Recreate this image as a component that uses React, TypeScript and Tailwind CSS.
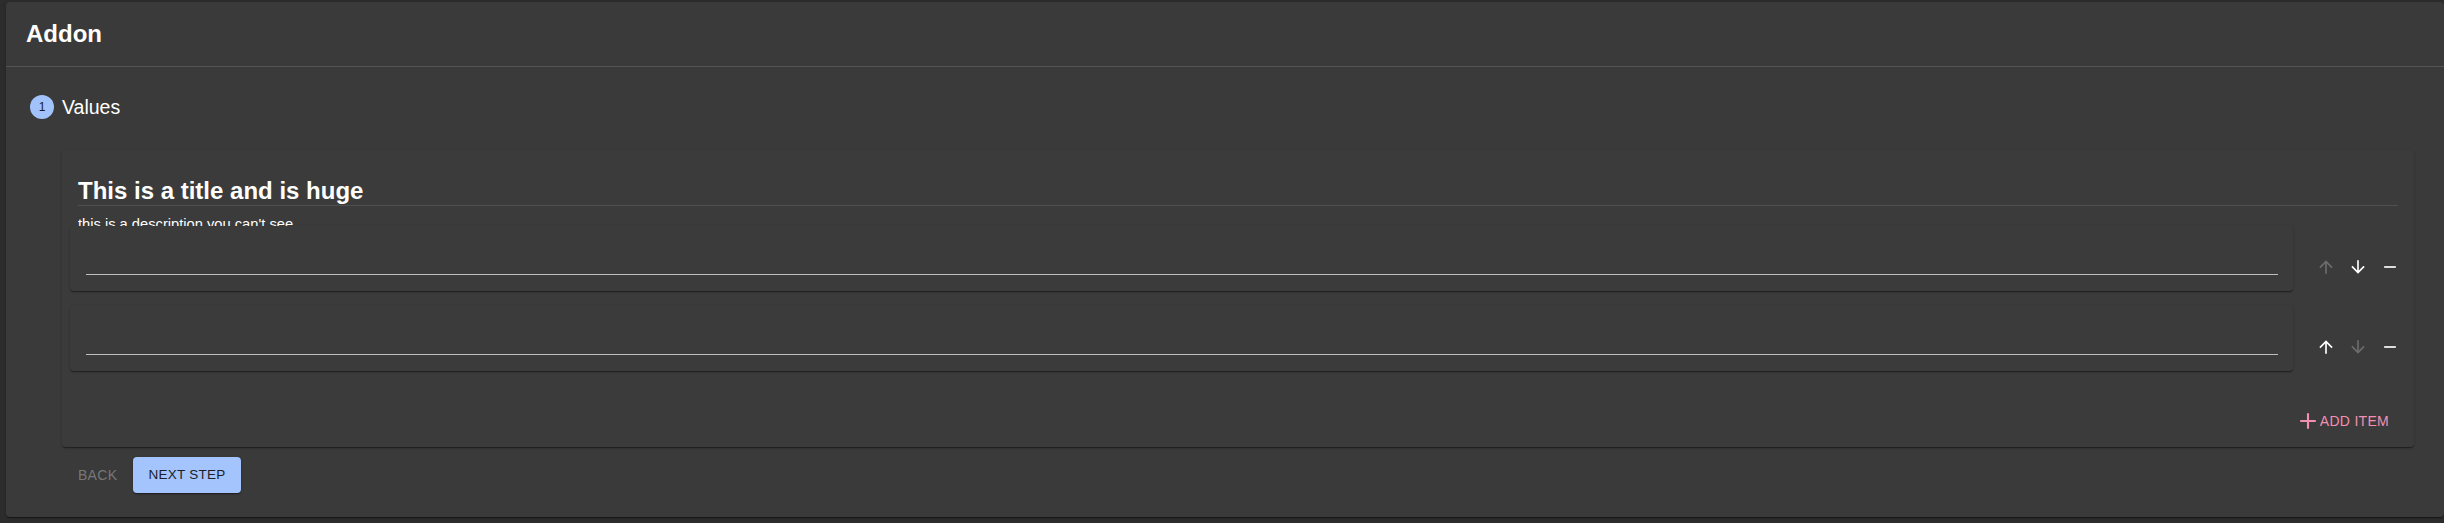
import { Plus } from "lucide-react"

const FONT = "font-['Liberation_Sans',Arial,sans-serif]"
const SHADOW = "shadow-[0_2px_1px_-1px_rgba(0,0,0,0.25),0_1px_1px_0_rgba(0,0,0,0.18),0_1px_3px_0_rgba(0,0,0,0.16)]"

function ArrowUp({ disabled }: { disabled?: boolean }) {
  return (
    <svg viewBox="0 0 24 24" className={`h-5 w-5 ${disabled ? "fill-[#6c6c6c]" : "fill-white"}`}>
      <path d="M4 12l1.41 1.41L11 7.83V20h2V7.83l5.58 5.59L20 12l-8-8-8 8z" />
    </svg>
  )
}

function ArrowDown({ disabled }: { disabled?: boolean }) {
  return (
    <svg viewBox="0 0 24 24" className={`h-5 w-5 ${disabled ? "fill-[#6c6c6c]" : "fill-white"}`}>
      <path d="M20 12l-1.41-1.41L13 16.17V4h-2v12.17l-5.58-5.59L4 12l8 8 8-8z" />
    </svg>
  )
}

function Remove() {
  return (
    <svg viewBox="0 0 24 24" className="h-5 w-5 fill-white">
      <path d="M19 13H5v-2h14v2z" />
    </svg>
  )
}

function ItemRow({ first, last }: { first?: boolean; last?: boolean }) {
  return (
    <div className="flex items-start mx-2">
      <div className={`flex-1 h-[65px] rounded bg-[#3b3b3b] ${SHADOW}`}>
        <div className="mt-[48px] ml-4 mr-[15px] border-b border-[#bdbdbd]" />
      </div>
      <div className="flex items-center mt-[25px] ml-[17px]">
        <button className="flex h-8 w-8 items-center justify-center">
          <ArrowUp disabled={first} />
        </button>
        <button className="flex h-8 w-8 items-center justify-center">
          <ArrowDown disabled={last} />
        </button>
        <button className="flex h-8 w-8 items-center justify-center">
          <Remove />
        </button>
      </div>
    </div>
  )
}

export default function App() {
  return (
    <div className={`h-[523px] bg-[#2c2c2c] pt-[2px] pl-[6px] ${FONT} text-white`}>
      <div className={`h-[515px] rounded bg-[#3a3a3a] ${SHADOW}`}>
        <div className="flex h-[65px] items-center px-5 border-b border-[#555555]">
          <h1 className="text-[24px] font-bold leading-none">Addon</h1>
        </div>

        <div className="pl-6 pr-[30px] pt-[28px]">
          <div className="flex items-center gap-2">
            <span className="flex h-6 w-6 items-center justify-center rounded-full bg-[#a1c2fb] text-[12px] text-[#1b1b1b]">
              1
            </span>
            <span className="text-[19.5px] leading-6">Values</span>
          </div>

          <div className="ml-8 mt-[31px]">
            <div className={`rounded bg-[#3b3b3b] ${SHADOW} pt-[26px] pb-2`}>
              <div className="mx-4 border-b border-[#4f4f4f]">
                <h2 className="text-[24px] font-bold leading-[29px]">This is a title and is huge</h2>
              </div>
              <p className="mx-4 mt-[8px] h-[12px] text-[14.7px] leading-[20px]">
                this is a description you can't see
              </p>
              <div className="relative flex flex-col gap-[15px]">
                <ItemRow first />
                <ItemRow last />
              </div>
              <div className="mt-[32px] flex justify-end pr-[17px]">
                <button className="flex h-9 items-center px-2 text-[14px] tracking-[0.02em] text-[#f48fb1]">
                  <Plus className="h-6 w-6" strokeWidth={2.1} />
                  ADD ITEM
                </button>
              </div>
            </div>

            <div className="mt-[10px] flex items-center">
              <button className="h-9 w-[71px] pl-4 text-left text-[14px] tracking-[0.02em] text-[#777777]">
                BACK
              </button>
              <button className={`h-9 w-[108px] rounded bg-[#a3c4fd] text-[13.5px] tracking-[0.02em] text-[#1b1d28] ${SHADOW}`}>
                NEXT STEP
              </button>
            </div>
          </div>
        </div>
      </div>
    </div>
  )
}
